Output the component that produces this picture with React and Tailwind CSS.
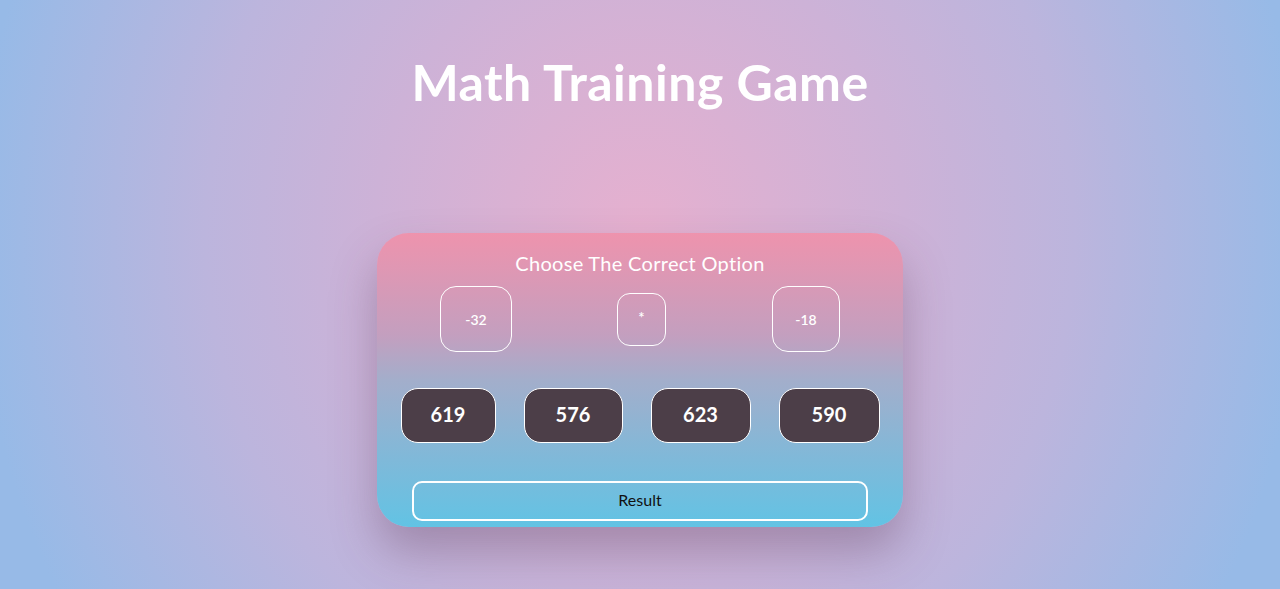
export default function App() {
  const answers = [
    { value: 619, w: "w-[95px]" },
    { value: 576, w: "w-[99px]" },
    { value: 623, w: "w-[100px]" },
    { value: 590, w: "w-[101px]" },
  ];

  return (
    <div
      className="min-h-[589px] w-full flex flex-col items-center bg-[radial-gradient(ellipse_700px_780px_at_50%_40%,#e6b0cf_0%,#cdb2d7_38%,#bcb5dd_62%,#97bae7_95%)]"
      style={{ fontFamily: "Lato, 'Noto Sans', sans-serif" }}
    >
      {/* Titre */}
      <h1 className="mt-[52px] text-[50px] leading-[60px] font-bold text-white tracking-[0.5px]">Math Training Game</h1>

      {/* Carte du jeu */}
      <div className="mt-[121px] w-[526px] h-[294px] rounded-[32px] bg-[linear-gradient(180deg,#ee93ad_0%,#c39fbf_35%,#a3aecb_50%,#82b8d8_75%,#62c3e4_100%)] shadow-[0_25px_45px_rgba(90,60,90,0.35)] flex flex-col items-center pt-[18px]">
        <h2 className="text-[20px] leading-[24px] text-white tracking-[0.3px]">Choose The Correct Option</h2>

        {/* Opérandes */}
        <div className="mt-[11px] w-full flex items-center">
          <div className="ml-[63px] w-[72px] h-[66px] border border-white rounded-[16px] flex items-center justify-center text-white text-[14px] font-semibold">-32</div>
          <div className="ml-[105px] w-[49px] h-[53px] border border-white rounded-[13px] flex items-start justify-center pt-[12px] text-white text-[15px] font-semibold">*</div>
          <div className="ml-[106px] w-[68px] h-[66px] border border-white rounded-[16px] flex items-center justify-center text-white text-[14px] font-semibold">-18</div>
        </div>

        {/* Réponses */}
        <div className="mt-[36px] flex gap-[28px]">
          {answers.map((a) => (
            <button
              key={a.value}
              className={`${a.w} h-[55px] bg-[#4c3e48] border border-white rounded-[17px] text-white text-[20px] font-bold pb-[3px]`}
            >
              {a.value}
            </button>
          ))}
        </div>

        {/* Bouton résultat */}
        <button className="mt-[38px] w-[456px] h-[40px] border-2 border-white rounded-[10px] text-[#111] text-[16px] pb-[2px]">
          Result
        </button>
      </div>
    </div>
  );
}
